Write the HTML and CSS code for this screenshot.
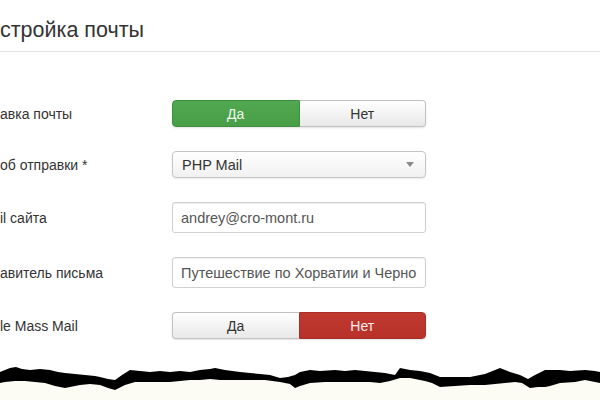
FILE: index.html
```html
<!DOCTYPE html>
<html lang="ru">
<head>
<meta charset="utf-8">
<title>Настройка почты</title>
<link rel="stylesheet" href="styles.css">
</head>
<body>
<div class="page">
  <div class="header">
    <h2 class="title">стройка почты</h2>
  </div>
  <div class="form">
    <div class="row">
      <div class="label">авка почты</div>
      <div class="toggle">
        <span class="opt opt-yes-active">Да</span>
        <span class="opt opt-off">Нет</span>
      </div>
    </div>
    <div class="row">
      <div class="label">об отправки *</div>
      <div class="select">
        <span class="select-text">PHP Mail</span>
        <svg class="caret" width="8" height="5" viewBox="0 0 8 5"><polygon points="0,0 8,0 4,5" fill="#8a8a8a"/></svg>
      </div>
    </div>
    <div class="row">
      <div class="label">il сайта</div>
      <div class="input">andrey@cro-mont.ru</div>
    </div>
    <div class="row">
      <div class="label">авитель письма</div>
      <div class="input">Путешествие по Хорватии и Черно</div>
    </div>
    <div class="row">
      <div class="label">le Mass Mail</div>
      <div class="toggle">
        <span class="opt opt-off">Да</span>
        <span class="opt opt-no-active">Нет</span>
      </div>
    </div>
  </div>
  <svg class="torn" width="600" height="40" viewBox="0 0 600 40">
    <polygon fill="#fcfcf5" points="600,23 590,21 585,20 575,22 560,23 550,26 545,27 538,27 530,28 522,23 515,22 505,23 495,24 485,25 470,25 455,26 440,27 432,23 425,21 410,18 400,18 390,21 380,23 370,22 355,22 340,22 325,22 310,23 300,26 295,28 290,24 280,22 265,20 250,20 235,20 220,20 210,19 200,20 190,20 180,21 170,22 150,22 135,22 125,25 115,30 108,28 100,25 90,24 80,25 70,27 65,28 55,26 45,23 35,22 25,21 15,21 5,22 0,23 0,40 600,40"/>
    <polygon fill="#000" points="0,12 5,10 10,8 16,7 22,9 30,10 40,9 50,10 58,12 65,13 75,14 85,15 95,16 100,17 108,19 115,20 122,15 130,10 140,11 150,12 160,11 170,12 180,11 190,12 200,10 210,9 215,8 225,10 240,12 250,13 260,14 270,15 280,18 288,17 295,15 300,12 310,10 320,11 335,10 345,11 355,10 365,11 375,12 385,13 395,15 400,8 410,10 420,11 430,13 440,17 455,17 470,17 485,14 495,10 500,8 510,12 520,15 528,19 535,15 545,10 560,10 570,11 585,10 595,11 600,12 600,23 590,21 585,20 575,22 560,23 550,26 545,27 538,27 530,28 522,23 515,22 505,23 495,24 485,25 470,25 455,26 440,27 432,23 425,21 410,18 400,18 390,21 380,23 370,22 355,22 340,22 325,22 310,23 300,26 295,28 290,24 280,22 265,20 250,20 235,20 220,20 210,19 200,20 190,20 180,21 170,22 150,22 135,22 125,25 115,30 108,28 100,25 90,24 80,25 70,27 65,28 55,26 45,23 35,22 25,21 15,21 5,22 0,23"/>
  </svg>
</div>
</body>
</html>
```

FILE: styles.css
```css
* { box-sizing: border-box; }
html, body { margin: 0; padding: 0; background: #fff; }
body {
  font-family: "Liberation Sans", Arial, sans-serif;
  color: #333;
  overflow: hidden;
}
.page {
  width: 600px;
  height: 400px;
  display: flex;
  flex-direction: column;
}
.header {
  padding-top: 18px;
  padding-bottom: 9px;
  border-bottom: 1px solid #e3e3e3;
}
.title {
  margin: 0;
  font-size: 21.5px;
  line-height: 24px;
  font-weight: normal;
  color: #333;
  white-space: nowrap;
}
.form {
  margin-top: 48px;
  display: flex;
  flex-direction: column;
  gap: 24px;
}
.row {
  display: flex;
  align-items: center;
}
.label {
  width: 172px;
  font-size: 14px;
  color: #333;
  white-space: nowrap;
}
.toggle {
  width: 254px;
  height: 27px;
  display: flex;
  border-radius: 4px;
  box-shadow: 0 1px 2px rgba(0,0,0,0.12);
}
.opt {
  flex: 1;
  display: flex;
  align-items: center;
  justify-content: center;
  font-size: 14px;
}
.opt:first-child { border-radius: 4px 0 0 4px; }
.opt:last-child { border-radius: 0 4px 4px 0; }
.opt-off {
  background: linear-gradient(#ffffff, #e8e8e8);
  border: 1px solid #c2c2c2;
  color: #333;
}
.opt-off:first-child { border-right: none; }
.opt-off:last-child { border-left: none; }
.opt-yes-active {
  background: linear-gradient(#51a851, #479e47);
  border: 1px solid #3f8f3f;
  color: #eef7ee;
}
.opt-no-active {
  background: linear-gradient(#c0392f, #b8322b);
  border: 1px solid #a82e28;
  color: #fbeaea;
}
.select {
  width: 254px;
  height: 27px;
  display: flex;
  align-items: center;
  justify-content: space-between;
  padding: 0 11px 0 9px;
  border: 1px solid #c4c4c4;
  border-radius: 4px;
  background: linear-gradient(#ffffff, #f1f1f1);
  box-shadow: 0 1px 2px rgba(0,0,0,0.08);
  font-size: 14.5px;
  color: #333;
}
.caret { display: block; }
.input {
  width: 254px;
  height: 31px;
  display: flex;
  align-items: center;
  padding: 0 8px;
  border: 1px solid #d0d0d0;
  border-radius: 3px;
  box-shadow: inset 0 1px 1px rgba(0,0,0,0.07);
  font-size: 14.5px;
  color: #555;
  white-space: nowrap;
  overflow: hidden;
}
.torn {
  display: block;
  margin-top: auto;
}
```
